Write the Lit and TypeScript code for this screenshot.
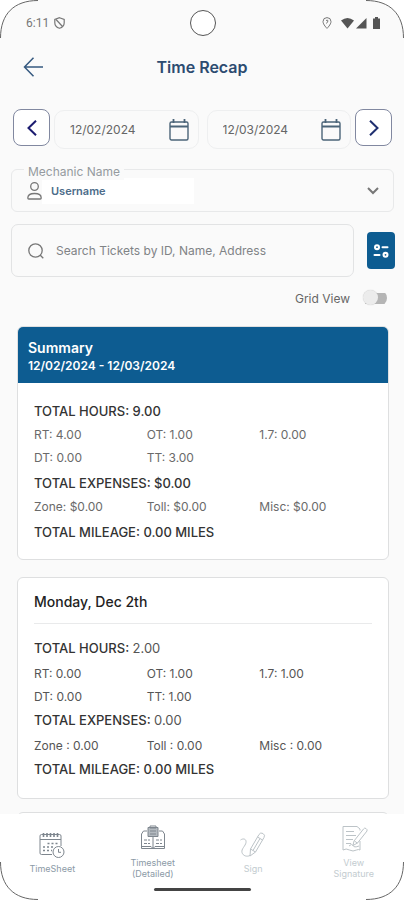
import { LitElement, html, svg, css, nothing } from "lit";
import { customElement, property, state } from "lit/decorators.js";

interface Recap {
  hours: string;
  rates: string[];
  expenses: string;
  costs: string[];
  mileage: string;
}

const SUMMARY: Recap = {
  hours: "9.00",
  rates: ["RT: 4.00", "OT: 1.00", "1.7: 0.00", "DT: 0.00", "TT: 3.00"],
  expenses: "$0.00",
  costs: ["Zone: $0.00", "Toll: $0.00", "Misc: $0.00"],
  mileage: "0.00 MILES",
};

const MONDAY: Recap = {
  hours: "2.00",
  rates: ["RT: 0.00", "OT: 1.00", "1.7: 1.00", "DT: 0.00", "TT: 1.00"],
  expenses: "0.00",
  costs: ["Zone : 0.00", "Toll : 0.00", "Misc : 0.00"],
  mileage: "0.00 MILES",
};

const calendarIcon = html`<svg width="20" height="22" viewBox="0 0 20 22" fill="none" stroke="#4b6478" stroke-width="1.4">
  <rect x="1" y="3" width="18" height="18" rx="1.5" />
  <path d="M1 7.500h18" stroke-width="2" /><path d="M4.500 0v4M15.500 0v4" stroke-width="1.8" />
</svg>`;

const timesheetIcon = svg`
  <path d="M14 23.500H3.500a1.500 1.500 0 0 1-1.500-1.500V5a1.500 1.500 0 0 1 1.500-1.500h18A1.500 1.500 0 0 1 23 5v10" />
  <path d="M2 8.500h21" />
  <path d="M5.500 2v4M9 2v4M12.500 2v4M16 2v4M19.500 2v4" stroke-width="1.600" />
  <path d="M9.500 12.500h11M5 16h11M5 19.500h9" stroke-dasharray="2 2" stroke-width="1.400" />
  <circle cx="20.500" cy="21" r="5.500" fill="#fff" /><path d="M20.500 18v3.300h2.500" />`;

const detailedIcon = svg`
  <path d="M8 6H4.500L2.500 9v14.500h23V9l-2-3H20" />
  <path d="M9 2.500h10v9H9z" fill="#b4bac0" /><path d="M11 1h6v2h-6zM11 6h6M11 9h6" />
  <path d="M14 12v11.500M2.500 21.500h9.500l2 2 2-2h9.500" />
  <path d="M5 15h6M17 15h6M5 18.500h6M17 18.500h6" stroke-dasharray="3 1" />`;

const signIcon = svg`
  <path d="M1.500 9c3-2 6-1 5.500 2.500S2 18 3 21.500s5 4.500 8 3" />
  <path d="m11.500 18 8.500-14.500q1.500-2.500 4-1t1 4L16.500 21 11 25z" />
  <path d="m11.500 18 5 3M18.500 6l5 3M14 19.500l7-12" />`;

const viewIcon = svg`
  <path d="M20 5.500V4l-3-2.500H3V25q3-2 6.500 0t7 0q2-1 3.500 0v-9" />
  <path d="M6 6.500h8M6 10.500h10M6 14.500h7M6 18.500h5" />
  <path d="m14 16 9.500-12q1-1.500 2.500-.500t1 2.500L17.500 18 13 20.500z" fill="#fff" />
  <path d="m14.500 16 3 2.200M9 21q3-3 4-.500t6 .500" />`;

@customElement("recap-card")
export class RecapCard extends LitElement {
  @property({ attribute: false }) data?: Recap;
  @property() heading = "";
  @property() range = "";
  @property({ type: Boolean, reflect: true }) daily = false;

  static styles = css`
    :host { display: block; }
    .card { background: #fff; border: 1px solid #dedfe0; border-radius: 6px; overflow: hidden; min-height: 24px; box-sizing: border-box; }
    .banner { background: #0d5c91; color: #fff; padding: 12px 11px 8px; margin: 0 -1px; font-weight: 600; line-height: 18px; }
    h2, p { margin: 0; font-size: inherit; font-weight: inherit; }
    .banner h2 { font-size: 14px; }
    .banner p { font-size: 12px; }
    .day { margin: 0 16px; padding: 14px 0 11px; border-bottom: 1px solid #e9eaeb; color: #222; font-size: 14px; font-weight: 500; line-height: 20px; }
    .body { padding: 16px 16px 15px; font-size: 12px; line-height: 23px; color: #6a6a6a; }
    .total { font-size: 13px; line-height: 24px; font-weight: 500; color: #333; }
    .group { display: grid; grid-template-columns: repeat(3, 1fr); margin-bottom: 2px; }
    .daily .body { padding: 12px 16px 17px; color: #555; }
    .daily .group { margin: 2px 0 0; }
    .light { font-weight: 400; color: #555; }
  `;

  render() {
    const d = this.data;
    const value = this.daily ? "light" : "";
    return html`<article class="card ${this.daily ? "daily" : ""}">
      ${this.range
        ? html`<header class="banner"><h2>${this.heading}</h2><p>${this.range}</p></header>`
        : this.heading
          ? html`<h2 class="day">${this.heading}</h2>`
          : nothing}
      ${d
        ? html`<div class="body">
            <p class="total">TOTAL HOURS: <span class=${value}>${d.hours}</span></p>
            <div class="group">${d.rates.map((r) => html`<span>${r}</span>`)}</div>
            <p class="total">TOTAL EXPENSES: <span class=${value}>${d.expenses}</span></p>
            <div class="group">${d.costs.map((c) => html`<span>${c}</span>`)}</div>
            <p class="total">TOTAL MILEAGE: ${d.mileage}</p>
          </div>`
        : nothing}
    </article>`;
  }
}

@customElement("app-root")
export class AppRoot extends LitElement {
  @state() private grid = false;

  static styles = css`
    :host { display: flex; flex-direction: column; height: 100vh; position: relative; background: #fafafa; overflow: hidden; font-family: Inter, "Liberation Sans", sans-serif; color: #555; }
    * { box-sizing: border-box; }
    button { padding: 0; border: 0; background: none; font: inherit; display: grid; place-items: center; cursor: pointer; }
    input, select { font: inherit; color: inherit; border: 0; background: none; min-width: 0; padding: 0; outline: none; }
    svg { display: block; flex: none; }
    .corner { position: absolute; pointer-events: none; }
    .tl { top: 0; left: 0; }
    .tr { top: 0; right: 0; transform: scaleX(-1); }
    .bl { bottom: 0; left: 0; transform: scaleY(-1); }
    .br { bottom: 0; right: 0; transform: scale(-1); }
    .status { display: grid; grid-template-columns: 1fr auto 1fr; align-items: center; height: 46px; padding: 0 24px 0 26px; flex: none; }
    .clock { display: flex; align-items: center; gap: 5px; font: 12px Roboto, sans-serif; color: #777; }
    .camera { width: 26px; height: 26px; border: 1px solid #555; border-radius: 50%; background: #fff; }
    .signals { display: flex; align-items: center; justify-content: flex-end; }
    .title { display: grid; grid-template-columns: 24px 1fr 24px; align-items: center; height: 42px; padding: 0 21px; flex: none; }
    .title h1 { margin: 0; text-align: center; font-size: 16px; font-weight: 600; color: #2c4b70; }
    .dates { display: flex; align-items: center; gap: 4px; padding: 18px 12px 0 13px; flex: none; }
    .step { width: 37px; height: 37px; border: 1px solid #8188a0; border-radius: 8px; background: #fff; flex: none; }
    .range { display: flex; flex: 1; gap: 8px; padding-top: 4px; min-width: 0; }
    .date { flex: 1; display: flex; align-items: center; height: 39px; padding: 0 9px 0 15px; border: 1px solid #eeeff0; border-radius: 10px; min-width: 0; font-size: 12px; color: #666; }
    .date input { flex: 1; width: 0; }
    .mechanic { position: relative; display: flex; align-items: center; height: 43px; margin: 20px 10px 0 11px; padding: 0 14px 0 15px; border: 1px solid #e8e9ea; border-radius: 6px; flex: none; }
    .mechanic label { position: absolute; top: -6px; left: 12px; padding: 0 4px; line-height: 16px; font-size: 12px; color: #959a9f; background: #fafafa; }
    .mechanic select { flex: 1; height: 26px; padding-left: 9px; appearance: none; font-size: 11px; font-weight: 600; color: #4c6c8a; background: linear-gradient(#fff, #fff) 0 0 / 152px 100% no-repeat; }
    .find { display: flex; align-items: center; gap: 13px; padding: 12px 9px 0 11px; flex: none; }
    .search { flex: 1; display: flex; align-items: center; gap: 12px; height: 53px; padding: 0 16px; border: 1px solid #e2e3e4; border-radius: 7px; min-width: 0; font-size: 12px; }
    .search input { flex: 1; }
    .search input::placeholder { color: #808386; opacity: 1; }
    .filter { width: 28px; height: 37px; border-radius: 4px; background: #0d5c91; flex: none; }
    .view { display: flex; align-items: center; justify-content: flex-end; gap: 13px; height: 42px; padding: 0 17px 0 0; font-size: 12px; color: #666; flex: none; }
    .switch { position: relative; appearance: none; width: 24px; height: 16px; margin: 0; background: linear-gradient(#b5b5b5, #b5b5b5) 100% 50% / 22px 11px no-repeat; border-radius: 8px; cursor: pointer; }
    .switch::before { content: ""; position: absolute; left: 0; top: 0; width: 15px; height: 15px; border-radius: 50%; background: #ececec; box-shadow: 0 0 1px #bbb; }
    .switch:checked::before { left: 9px; }
    main { flex: 1; min-height: 0; overflow-y: auto; scrollbar-width: none; display: flex; flex-direction: column; gap: 17px; padding: 7px 15px 0 17px; }
    recap-card { flex: none; }
    .next { margin-top: -4px; }
    .tabs { background: #fff; padding: 2px 0 0; flex: none; }
    .tabs nav { display: grid; grid-template-columns: repeat(4, 1fr); align-items: center; height: 72px; padding-left: 2px; }
    .tabs a { display: flex; flex-direction: column; align-items: center; gap: 4px; font-size: 9px; line-height: 11px; text-align: center; text-decoration: none; color: #8b9aa6; white-space: pre-line; }
    .tabs .off { color: #c3ccd0; }
    .home { width: 97px; height: 3px; margin: 0 auto 9px; border-radius: 2px; background: #444; }
  `;

  private corner(cls: string) {
    return html`<svg class="corner ${cls}" width="38" height="38" viewBox="0 0 38 38" aria-hidden="true">
      <path d="M0 0H38C14 .5.5 14 0 38z" fill="#fff" /><path d="M.5 38C.5 14 14 .5 38 .5" fill="none" stroke="#666" />
    </svg>`;
  }

  private date(name: string, value: string) {
    return html`<div class="date">
      <input type="text" aria-label=${name} .value=${value} />
      <button aria-label="Open calendar">${calendarIcon}</button>
    </div>`;
  }

  private tab(label: string, icon: unknown, off = false) {
    return html`<a href="#" class=${off ? "off" : ""}>
      <svg width="28" height="28" viewBox="0 0 28 28" fill="none" stroke=${off ? "#bcc3c7" : "#7e868e"}>${icon}</svg><span>${label}</span>
    </a>`;
  }

  render() {
    return html`
      <div class="status">
        <div class="clock">
          <span>6:11</span>
          <svg width="11" height="12" viewBox="0 0 11 12" fill="none" stroke="#777" stroke-width="1.2">
            <path d="M5.500 .700 10.200 2.500v3.200c0 2.800-2 4.700-4.700 5.600C2.800 10.400.800 8.500.800 5.700V2.500z" /><path d="m2 2.500 6.500 7" />
          </svg>
        </div>
        <div class="camera"></div>
        <div class="signals">
          <svg width="58" height="12" viewBox="0 0 58 12" fill="#555">
            <path d="M5 .600a4 4 0 0 1 4 4C9 7.500 5 11.400 5 11.400S1 7.500 1 4.600a4 4 0 0 1 4-4z" fill="none" stroke="#777" />
            <path d="M4 3.500q2-1 2 .500L4.500 6.500" fill="none" stroke="#777" />
            <path d="M19 3.500Q25.500-1.500 32 3.500L25.500 11.500z" />
            <path d="M44.500 1v10.500H34z" />
            <path d="M53 0h3v1.500h2V12h-7V1.500h2z" />
          </svg>
        </div>
      </div>

      <header class="title">
        <button aria-label="Back">
          <svg width="20" height="20" viewBox="0 0 20 20" fill="none" stroke="#365a80" stroke-width="1.5">
            <path d="M20 10H1.500M10.500 .700 1.500 10l9 9.300" />
          </svg>
        </button>
        <h1>Time Recap</h1>
      </header>

      <div class="dates">
        <button class="step" aria-label="Previous">
          <svg width="10" height="16" viewBox="0 0 10 16" fill="none" stroke="#1c1c70" stroke-width="2"><path d="M9 .700 1.500 8 9 15.300" /></svg>
        </button>
        <div class="range">${this.date("From", "12/02/2024")}${this.date("To", "12/03/2024")}</div>
        <button class="step" aria-label="Next">
          <svg width="10" height="16" viewBox="0 0 10 16" fill="none" stroke="#1f2f70" stroke-width="2"><path d="M1 .700 8.500 8 1 15.300" /></svg>
        </button>
      </div>

      <div class="mechanic">
        <label for="mechanic">Mechanic Name</label>
        <svg width="15" height="18" viewBox="0 0 15 18" fill="none" stroke="#777" stroke-width="1.3">
          <circle cx="7.500" cy="4.500" r="3.800" /><path d="M.800 16c0-3 2-4.500 6.700-4.500s6.700 1.500 6.700 4.500q0 1-1 1H1.800q-1 0-1-1z" />
        </svg>
        <select id="mechanic"><option>Username</option></select>
        <svg width="12" height="8" viewBox="0 0 12 8" fill="none" stroke="#777" stroke-width="2"><path d="m1 1 5 5 5-5" /></svg>
      </div>

      <div class="find">
        <div class="search">
          <svg width="16" height="16" viewBox="0 0 16 16" fill="none" stroke="#777" stroke-width="1.3">
            <circle cx="7.500" cy="7.500" r="6.700" /><path d="m12 12 3.300 3.300" />
          </svg>
          <input type="text" aria-label="Search tickets" placeholder="Search Tickets by ID, Name, Address" />
        </div>
        <button class="filter" aria-label="Filters">
          <svg width="16" height="14" viewBox="0 0 16 14" fill="#fff">
            <circle cx="4" cy="3.200" r="3" /><rect x="8.500" y="2.200" width="7" height="2" rx="1" />
            <rect x=".500" y="10" width="7" height="2" rx="1" /><circle cx="12.500" cy="10.800" r="3" />
            <circle cx="4" cy="3.200" r=".900" fill="#0d5c91" /><circle cx="12.500" cy="10.800" r=".900" fill="#0d5c91" />
          </svg>
        </button>
      </div>

      <div class="view">
        <label for="grid">Grid View</label>
        <input class="switch" id="grid" type="checkbox" .checked=${this.grid}
          @change=${(e: Event) => (this.grid = (e.target as HTMLInputElement).checked)} />
      </div>

      <main>
        <recap-card heading="Summary" range="12/02/2024 - 12/03/2024" .data=${SUMMARY}></recap-card>
        <recap-card daily heading="Monday, Dec 2th" .data=${MONDAY}></recap-card>
        <recap-card class="next" daily></recap-card>
      </main>

      <footer class="tabs">
        <nav>
          ${this.tab("TimeSheet", timesheetIcon)}
          ${this.tab("Timesheet\n(Detailed)", detailedIcon)}
          ${this.tab("Sign", signIcon, true)}
          ${this.tab("View\nSignature", viewIcon, true)}
        </nav>
        <div class="home"></div>
      </footer>
      ${["tl", "tr", "bl", "br"].map((c) => this.corner(c))}
    `;
  }
}
